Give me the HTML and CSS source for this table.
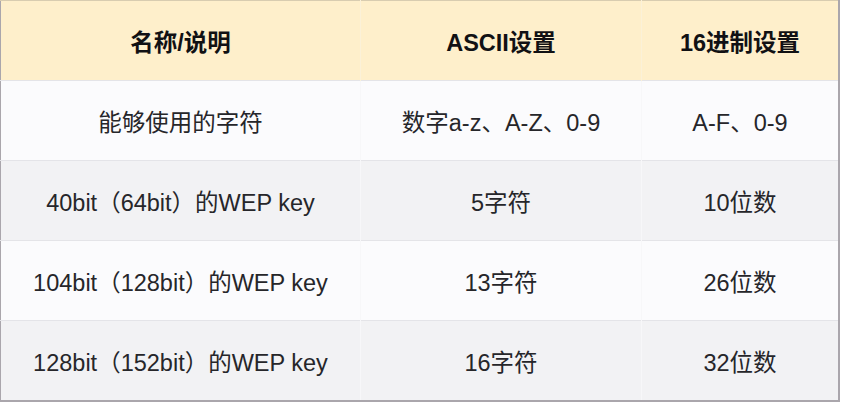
FILE: index.html
```html
<!DOCTYPE html>
<html lang="zh-CN">
<head>
<meta charset="utf-8">
<link rel="stylesheet" href="styles.css">
</head>
<body>
<table class="wep">
  <thead>
    <tr class="head">
      <th class="c1">名称/说明</th>
      <th class="c2">ASCII设置</th>
      <th class="c3">16进制设置</th>
    </tr>
  </thead>
  <tbody>
    <tr class="odd">
      <td>能够使用的字符</td>
      <td>数字a-z、A-Z、0-9</td>
      <td>A-F、0-9</td>
    </tr>
    <tr class="even">
      <td>40bit（64bit）的WEP key</td>
      <td>5字符</td>
      <td>10位数</td>
    </tr>
    <tr class="odd">
      <td>104bit（128bit）的WEP key</td>
      <td>13字符</td>
      <td>26位数</td>
    </tr>
    <tr class="even">
      <td>128bit（152bit）的WEP key</td>
      <td>16字符</td>
      <td>32位数</td>
    </tr>
  </tbody>
</table>
</body>
</html>
```
FILE: styles.css
```css
html, body {
  margin: 0;
  padding: 0;
  background: #ffffff;
}
.wep {
  width: 840px;
  border-collapse: collapse;
  table-layout: fixed;
  font-family: "Liberation Sans", "Noto Sans CJK SC", sans-serif;
  font-size: 23.5px;
  color: #26262a;
  border-left: 1px solid #aaa6ac;
  border-right: 2px solid #aaa6ac;
  border-bottom: 2px solid #aaa6ac;
}
.wep th, .wep td {
  text-align: center;
  vertical-align: middle;
  padding: 0;
  border-top: 1px solid #e4e4e8;
  border-right: 1px solid #f7f7f9;
}
.wep th:last-child, .wep td:last-child {
  border-right: none;
}
.c1 { width: 359px; }
.c2 { width: 280px; }
.c3 { width: auto; }
.head th {
  height: 79px;
  background: #feefcb;
  font-weight: bold;
  color: #111114;
  border-top: 1px solid #d8ccb0;
  border-right: 1px solid #fbf1d8;
}
.odd td {
  height: 79px;
  background: #fbfbfd;
}
.even td {
  height: 79px;
  background: #f2f2f4;
}
```
